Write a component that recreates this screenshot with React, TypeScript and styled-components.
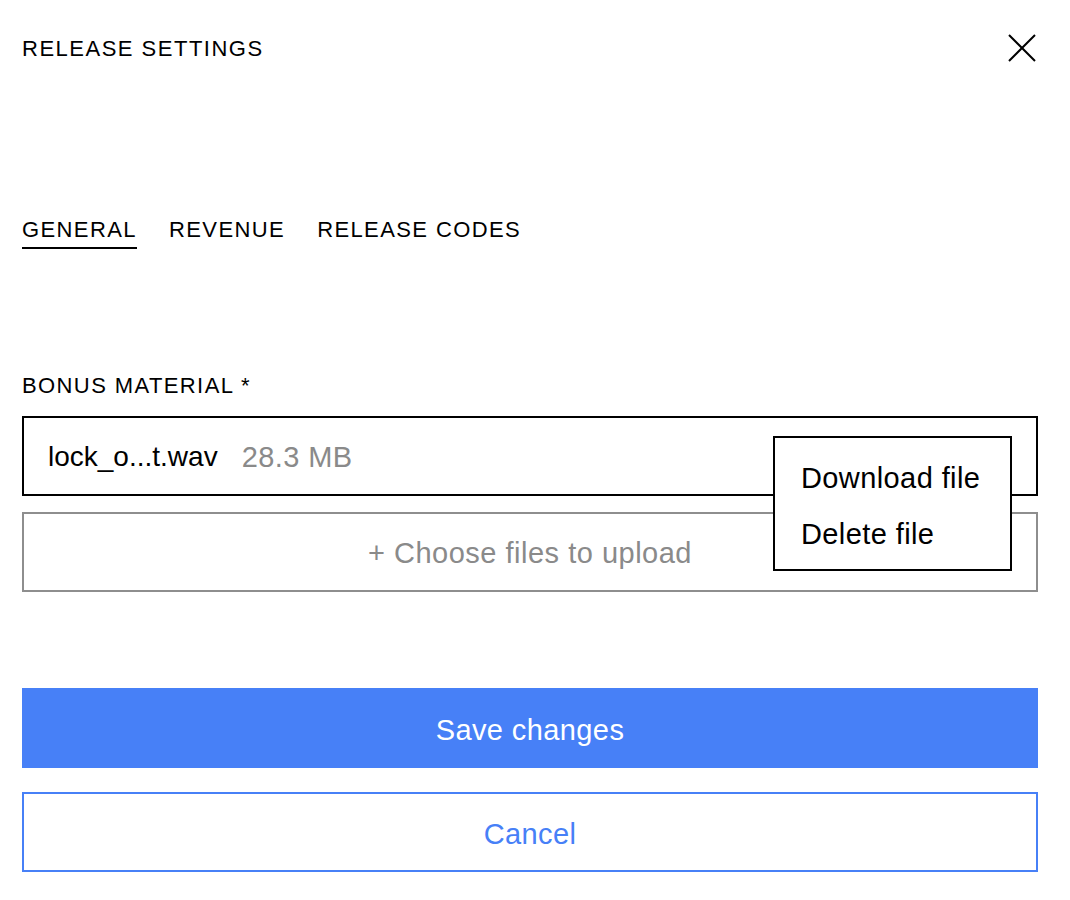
import React from 'react';
import styled, {createGlobalStyle} from 'styled-components';

const GlobalStyle = createGlobalStyle`
  html, body {
    margin: 0;
    padding: 0;
    background: #ffffff;
    font-family: "Liberation Sans", Arial, Helvetica, sans-serif;
    color: #000000;
  }
`;

const TABS = ['GENERAL', 'REVENUE', 'RELEASE CODES'];
const BLUE = '#4780f7';

const App = () => {
    return (
        <>
            <GlobalStyle/>
            <Page>
                <Header>
                    <Title>RELEASE SETTINGS</Title>
                    <CloseButton aria-label="close">
                        <svg width="28" height="28" viewBox="0 0 28 28">
                            <path d="M1 1 L27 27 M27 1 L1 27" stroke="#000" strokeWidth="2" fill="none"/>
                        </svg>
                    </CloseButton>
                </Header>
                <TabBar>
                    {TABS.map((tab, index) => (
                        <Tab key={tab} $active={index === 0}>{tab}</Tab>
                    ))}
                </TabBar>
                <FieldLabel>BONUS MATERIAL *</FieldLabel>
                <FileField>
                    <FileName>lock_o...t.wav</FileName>
                    <FileSize>28.3 MB</FileSize>
                    <FileMenu>
                        <MenuItem>Download file</MenuItem>
                        <MenuItem>Delete file</MenuItem>
                    </FileMenu>
                </FileField>
                <UploadButton>+ Choose files to upload</UploadButton>
                <Actions>
                    <ActionButton $primary>Save changes</ActionButton>
                    <ActionButton>Cancel</ActionButton>
                </Actions>
            </Page>
        </>
    );
};

export default App;

const Page = styled.div`
  width: 1016px;
  padding: 0 22px 28px;
  display: flex;
  flex-direction: column;
`;

const Header = styled.div`
  height: 96px;
  display: flex;
  justify-content: space-between;
  align-items: center;
`;

const Title = styled.h1`
  margin: 0;
  padding-top: 2px;
  font-size: 22px;
  font-weight: 400;
  letter-spacing: 1.5px;
  line-height: 26px;
`;

const CloseButton = styled.button`
  border: none;
  background: none;
  padding: 0;
  margin-right: 2px;
  width: 28px;
  height: 28px;
  display: flex;
  cursor: pointer;
`;

const TabBar = styled.div`
  margin-top: 119px;
  display: flex;
  gap: 32px;
`;

const Tab = styled.div<{$active?: boolean}>`
  font-size: 22px;
  letter-spacing: 1.4px;
  line-height: 26px;
  padding-top: 2px;
  padding-bottom: 4px;
  border-bottom: 2px solid ${props => props.$active ? '#000' : 'transparent'};
  cursor: pointer;
`;

const FieldLabel = styled.div`
  margin-top: 124px;
  margin-bottom: -1px;
  font-size: 22px;
  letter-spacing: 1.4px;
  line-height: 26px;
`;

const FileField = styled.div`
  position: relative;
  margin-top: 18px;
  height: 80px;
  box-sizing: border-box;
  border: 2px solid #000;
  display: flex;
  align-items: center;
  gap: 24px;
  padding: 2px 24px 0;
`;

const FileName = styled.span`
  font-size: 28px;
  color: #000;
`;

const FileSize = styled.span`
  font-size: 29px;
  letter-spacing: 0.4px;
  color: #8a8a8a;
`;

const FileMenu = styled.div`
  position: absolute;
  top: 18px;
  right: 24px;
  width: 239px;
  box-sizing: border-box;
  border: 2px solid #000;
  background: #fff;
  padding: 12px 0 7px;
  z-index: 2;
`;

const MenuItem = styled.div`
  height: 56px;
  line-height: 56px;
  padding: 0 26px;
  font-size: 29px;
  letter-spacing: 0.4px;
  color: #000;
  cursor: pointer;
`;

const UploadButton = styled.div`
  margin-top: 16px;
  height: 80px;
  box-sizing: border-box;
  border: 2px solid #8e8e8e;
  padding-top: 3px;
  display: flex;
  align-items: center;
  justify-content: center;
  font-size: 29px;
  letter-spacing: 0.5px;
  color: #8a8a8a;
`;

const Actions = styled.div`
  margin-top: 96px;
  display: flex;
  flex-direction: column;
  gap: 24px;
`;

const ActionButton = styled.button<{$primary?: boolean}>`
  height: 80px;
  box-sizing: border-box;
  border: 2px solid ${BLUE};
  background: ${props => props.$primary ? BLUE : '#fff'};
  color: ${props => props.$primary ? '#fff' : BLUE};
  font-family: inherit;
  font-size: 29px;
  letter-spacing: 0.4px;
  padding: 4px 0 0;
  cursor: pointer;
`;
